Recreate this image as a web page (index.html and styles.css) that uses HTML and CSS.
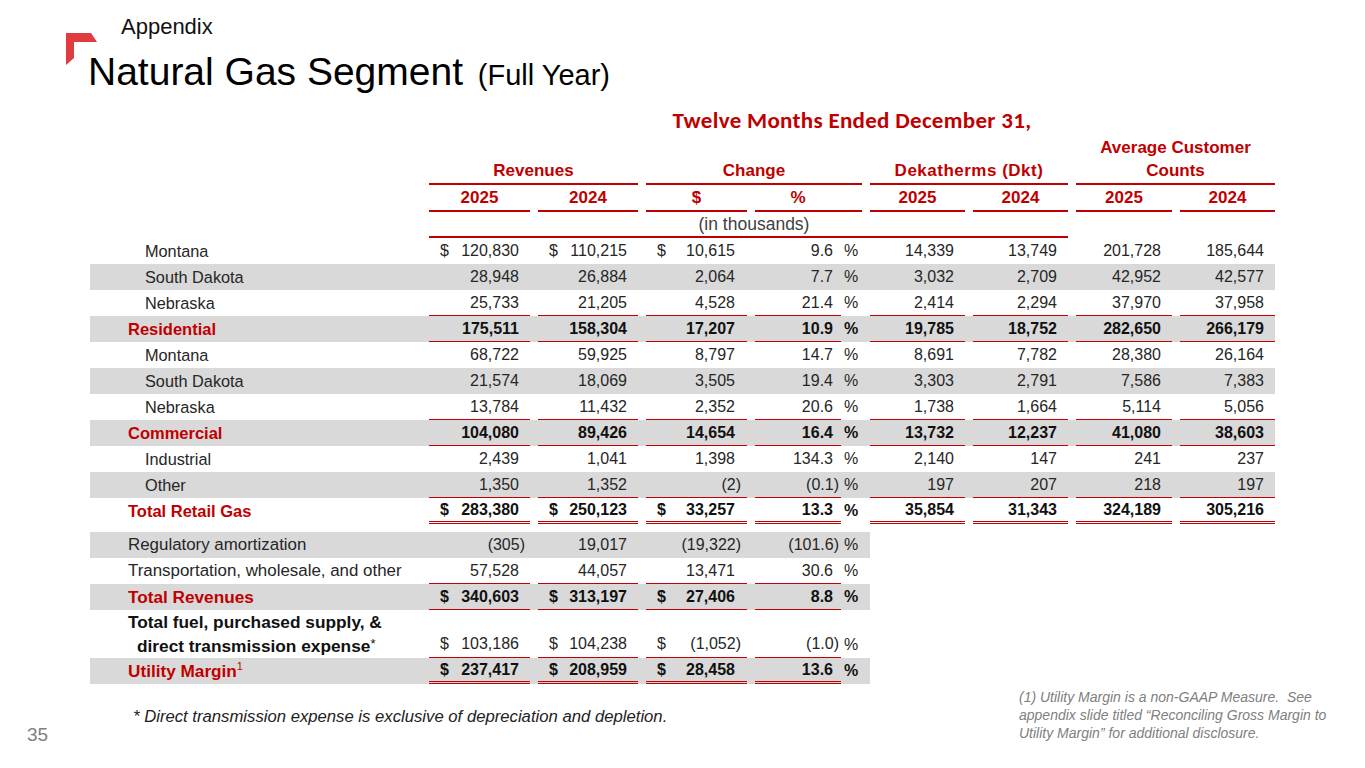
FILE: index.html
```html
<!DOCTYPE html>
<html lang="en">
<head>
<meta charset="utf-8">
<title>Natural Gas Segment (Full Year)</title>
<link rel="stylesheet" href="styles.css">
</head>
<body>
<div class="page">
  <svg class="logo" viewBox="0 0 36 36" width="36" height="36" aria-hidden="true">
    <polygon points="2,2 27,2 33,11 10,11 10,27 2,34" fill="#e03c3f"/>
  </svg>
  <header class="head">
    <div class="appendix">Appendix</div>
    <h1 class="title">Natural Gas Segment <span class="sub">(Full Year)</span></h1>
  </header>

  <section class="tbl">
    <div class="row hdr-a"><div class="tmonths">Twelve Months Ended December 31,</div></div>
    <div class="row hdr-b">
      <div class="grp g-rev">Revenues</div>
      <div class="grp g-chg">Change</div>
      <div class="grp g-dkt">Dekatherms (Dkt)</div>
      <div class="grp g-avg">Average Customer<br>Counts</div>
    </div>
    <div class="row hdr-c">
      <div class="yr f">2025</div>
      <div class="yr">2024</div>
      <div class="yr">$</div>
      <div class="yr pcth">%</div>
      <div class="yr yd">2025</div>
      <div class="yr">2024</div>
      <div class="yr">2025</div>
      <div class="yr">2024</div>
    </div>
    <div class="row hdr-d">
      <div class="th th-a"></div>
      <div class="th th-b">(in thousands)</div>
      <div class="th th-c"></div>
    </div>

    <div class="row d">
      <div class="lab st">Montana</div>
      <div class="n f dl"><span>$</span><span>120,830</span></div>
      <div class="n dl"><span>$</span><span>110,215</span></div>
      <div class="n c3 dl"><span>$</span><span>10,615</span></div>
      <div class="n c4">9.6</div><div class="pct">%</div>
      <div class="n">14,339</div><div class="n">13,749</div><div class="n">201,728</div><div class="n">185,644</div>
    </div>
    <div class="row d band">
      <div class="lab st">South Dakota</div>
      <div class="n f">28,948</div><div class="n">26,884</div><div class="n c3">2,064</div>
      <div class="n c4">7.7</div><div class="pct">%</div>
      <div class="n">3,032</div><div class="n">2,709</div><div class="n">42,952</div><div class="n">42,577</div>
    </div>
    <div class="row d ul">
      <div class="lab st">Nebraska</div>
      <div class="n f">25,733</div><div class="n">21,205</div><div class="n c3">4,528</div>
      <div class="n c4">21.4</div><div class="pct">%</div>
      <div class="n">2,414</div><div class="n">2,294</div><div class="n">37,970</div><div class="n">37,958</div>
    </div>
    <div class="row d band bold ul">
      <div class="lab cat">Residential</div>
      <div class="n f">175,511</div><div class="n">158,304</div><div class="n c3">17,207</div>
      <div class="n c4">10.9</div><div class="pct">%</div>
      <div class="n">19,785</div><div class="n">18,752</div><div class="n">282,650</div><div class="n">266,179</div>
    </div>
    <div class="row d">
      <div class="lab st">Montana</div>
      <div class="n f">68,722</div><div class="n">59,925</div><div class="n c3">8,797</div>
      <div class="n c4">14.7</div><div class="pct">%</div>
      <div class="n">8,691</div><div class="n">7,782</div><div class="n">28,380</div><div class="n">26,164</div>
    </div>
    <div class="row d band">
      <div class="lab st">South Dakota</div>
      <div class="n f">21,574</div><div class="n">18,069</div><div class="n c3">3,505</div>
      <div class="n c4">19.4</div><div class="pct">%</div>
      <div class="n">3,303</div><div class="n">2,791</div><div class="n">7,586</div><div class="n">7,383</div>
    </div>
    <div class="row d ul">
      <div class="lab st">Nebraska</div>
      <div class="n f">13,784</div><div class="n">11,432</div><div class="n c3">2,352</div>
      <div class="n c4">20.6</div><div class="pct">%</div>
      <div class="n">1,738</div><div class="n">1,664</div><div class="n">5,114</div><div class="n">5,056</div>
    </div>
    <div class="row d band bold ul">
      <div class="lab cat">Commercial</div>
      <div class="n f">104,080</div><div class="n">89,426</div><div class="n c3">14,654</div>
      <div class="n c4">16.4</div><div class="pct">%</div>
      <div class="n">13,732</div><div class="n">12,237</div><div class="n">41,080</div><div class="n">38,603</div>
    </div>
    <div class="row d">
      <div class="lab st">Industrial</div>
      <div class="n f">2,439</div><div class="n">1,041</div><div class="n c3">1,398</div>
      <div class="n c4">134.3</div><div class="pct">%</div>
      <div class="n">2,140</div><div class="n">147</div><div class="n">241</div><div class="n">237</div>
    </div>
    <div class="row d band ul">
      <div class="lab st">Other</div>
      <div class="n f">1,350</div><div class="n">1,352</div><div class="n c3"><span class="neg">(2)</span></div>
      <div class="n c4"><span class="neg">(0.1)</span></div><div class="pct">%</div>
      <div class="n">197</div><div class="n">207</div><div class="n">218</div><div class="n">197</div>
    </div>
    <div class="row d bold dbl">
      <div class="lab cat">Total Retail Gas</div>
      <div class="n f dl"><span>$</span><span>283,380</span></div>
      <div class="n dl"><span>$</span><span>250,123</span></div>
      <div class="n c3 dl"><span>$</span><span>33,257</span></div>
      <div class="n c4">13.3</div><div class="pct">%</div>
      <div class="n">35,854</div><div class="n">31,343</div><div class="n">324,189</div><div class="n">305,216</div>
    </div>
  </section>

  <section class="tbl2">
    <div class="row d band">
      <div class="lab cat plain">Regulatory amortization</div>
      <div class="n f"><span class="neg">(305)</span></div><div class="n">19,017</div><div class="n c3"><span class="neg">(19,322)</span></div>
      <div class="n c4"><span class="neg">(101.6)</span></div><div class="pct">%</div>
    </div>
    <div class="row d ul">
      <div class="lab cat plain">Transportation, wholesale, and other</div>
      <div class="n f">57,528</div><div class="n">44,057</div><div class="n c3">13,471</div>
      <div class="n c4">30.6</div><div class="pct">%</div>
    </div>
    <div class="row d band bold ul">
      <div class="lab cat">Total Revenues</div>
      <div class="n f dl"><span>$</span><span>340,603</span></div>
      <div class="n dl"><span>$</span><span>313,197</span></div>
      <div class="n c3 dl"><span>$</span><span>27,406</span></div>
      <div class="n c4">8.8</div><div class="pct">%</div>
    </div>
    <div class="row d tall ul">
      <div class="lab cat two"><span>Total fuel, purchased supply, &amp;</span><span class="ind">direct transmission expense<span class="ast">*</span></span></div>
      <div class="n f dl"><span>$</span><span>103,186</span></div>
      <div class="n dl"><span>$</span><span>104,238</span></div>
      <div class="n c3 dl"><span>$</span><span class="neg">(1,052)</span></div>
      <div class="n c4"><span class="neg">(1.0)</span></div><div class="pct">%</div>
    </div>
    <div class="row d band bold dbl">
      <div class="lab cat"><span>Utility Margin<sup class="sup">1</sup></span></div>
      <div class="n f dl"><span>$</span><span>237,417</span></div>
      <div class="n dl"><span>$</span><span>208,959</span></div>
      <div class="n c3 dl"><span>$</span><span>28,458</span></div>
      <div class="n c4">13.6</div><div class="pct">%</div>
    </div>
  </section>

  <footer class="foot">
    <div class="pgnum">35</div>
    <div class="note">* Direct transmission expense is exclusive of depreciation and depletion.</div>
    <div class="rnote">(1) Utility Margin is a non-GAAP Measure.&nbsp; See<br>appendix slide titled “Reconciling Gross Margin to<br>Utility Margin” for additional disclosure.</div>
  </footer>
</div>
</body>
</html>
```

FILE: styles.css
```css
* { box-sizing: border-box; }
body {
  margin: 0;
  background: #fff;
  font-family: "Liberation Sans", Arial, sans-serif;
  color: #262626;
}
.page {
  position: relative;
  width: 1365px;
  height: 768px;
  overflow: hidden;
  background: #fff;
}
.logo {
  position: absolute;
  left: 64px;
  top: 31px;
}
.head { padding-top: 14px; }
.appendix {
  margin-left: 121px;
  font-size: 22px;
  line-height: 26px;
  color: #111;
}
.title {
  margin: 10px 0 0 88px;
  font-size: 39px;
  line-height: 44px;
  font-weight: normal;
  color: #000;
}
.title .sub { font-size: 29px; margin-left: 4px; }

.tbl {
  margin: 3px 0 0 90px;
  width: 1185px;
}
.row {
  display: grid;
  grid-template-columns: 339px 101px 108px 109px 94px 21px 103px 103px 104px 103px;
}
.hdr-a { height: 36px; }
.tmonths {
  grid-column: 2 / 11;
  text-align: center;
  font-family: Carlito, Lato, "Liberation Sans", sans-serif;
  font-weight: bold;
  font-size: 23px;
  letter-spacing: 0.3px;
  line-height: 32px;
  padding-top: 4px;
  color: #c00000;
}
.grp {
  align-self: end;
  margin-left: 8px;
  text-align: center;
  font-size: 17px;
  font-weight: bold;
  line-height: 23px;
  padding-bottom: 1px;
  color: #c00000;
  border-bottom: 2px solid #c00000;
}
.g-rev { grid-column: 2 / 4; margin-left: 0; }
.g-chg { grid-column: 4 / 7; }
.g-dkt { grid-column: 7 / 9; letter-spacing: 0.5px; }
.g-avg { grid-column: 9 / 11; }

.hdr-c { height: 27px; }
.yr {
  margin-left: 8px;
  text-align: center;
  font-size: 17px;
  font-weight: bold;
  line-height: 25px;
  color: #c00000;
  border-bottom: 2px solid #c00000;
}
.yr.f { grid-column-start: 2; margin-left: 0; }
.pcth { grid-column: 5 / 7; padding-right: 21px; }

.hdr-d { height: 26px; }
.th {
  border-bottom: 2px solid #c00000;
  font-size: 17.5px;
  line-height: 24px;
  color: #404040;
  text-align: center;
}
.th-a { grid-column: 2 / 4; }
.th-b { grid-column: 4 / 7; padding-left: 8px; }
.th-c { grid-column: 7 / 9; }

.d { height: 26px; }
.band { background: #d9d9d9; }
.lab {
  display: flex;
  align-items: center;
  font-size: 16.3px;
  color: #262626;
  white-space: nowrap;
}
.st { padding-left: 55px; }
.cat {
  padding-left: 38px;
  color: #c00000;
  font-weight: bold;
  font-size: 16.5px;
}
.cat.plain { color: #262626; font-weight: normal; }
.n {
  margin-left: 8px;
  display: flex;
  align-items: center;
  justify-content: flex-end;
  padding: 0 11px;
  font-size: 16px;
  white-space: nowrap;
}
.n.f { margin-left: 0; }
.n.dl { justify-content: space-between; }
.n.c3 { padding-right: 12px; }
.n.c4 { padding-right: 8px; }
.neg { margin-right: -6px; }
.pct {
  display: flex;
  align-items: center;
  padding-left: 3px;
  font-size: 16px;
}
.ul .n { border-bottom: 1px solid #c00000; }
.dbl .n { border-bottom: 3px double #c00000; }
.bold .n, .bold .pct { font-weight: bold; color: #111; }

.tbl2 {
  margin: 8px 0 0 90px;
  width: 780px;
}
.tbl2 .row {
  grid-template-columns: 339px 101px 108px 109px 94px 21px 8px;
}
.tbl2 .lab { font-size: 17px; }
.tbl2 .cat { font-size: 17.2px; }
.tbl2 .cat.plain { font-size: 16.9px; }
.tall { height: 48px; }
.tall .n, .tall .pct {
  align-items: flex-end;
  padding-bottom: 2px;
  line-height: 22px;
}
.two {
  flex-direction: column;
  align-items: flex-start;
  justify-content: center;
  line-height: 22px;
  color: #111;
}
.tbl2 .two { font-size: 17.3px; }
.two .ind { padding-left: 9px; }
.ast { font-weight: normal; font-size: 13px; vertical-align: 4px; }
.sup {
  font-size: 11px;
  font-weight: normal;
  vertical-align: 7px;
  line-height: 0;
}

.foot {
  display: flex;
  align-items: flex-start;
  margin-top: 4px;
}
.pgnum {
  width: 106px;
  margin-left: 27px;
  margin-top: 38px;
  font-size: 19px;
  line-height: 18px;
  color: #7f7f7f;
}
.note {
  margin-top: 19px;
  font-style: italic;
  font-size: 16.7px;
  line-height: 20px;
  color: #222;
  white-space: nowrap;
}
.rnote {
  margin-left: auto;
  margin-right: 10px;
  width: 336px;
  font-style: italic;
  font-size: 14px;
  line-height: 18px;
  color: #808080;
  white-space: nowrap;
}
```
